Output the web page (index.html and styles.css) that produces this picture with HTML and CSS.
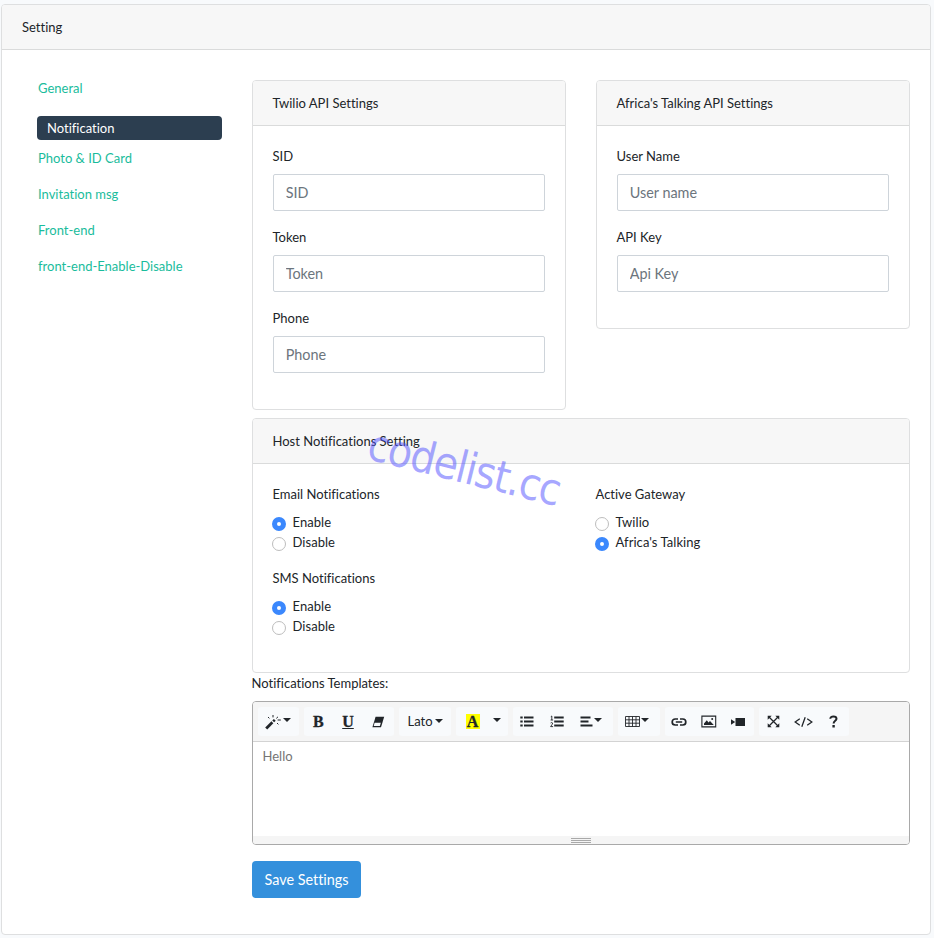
FILE: index.html
```html
<!DOCTYPE html>
<html lang="en">
<head>
<meta charset="utf-8">
<title>Setting</title>
<link rel="stylesheet" href="styles.css">
</head>
<body>
<main class="card page-card">
  <header class="card-header">Setting</header>
  <div class="page-body">
    <nav class="side-nav">
      <a href="#">General</a>
      <a href="#" class="active">Notification</a>
      <a href="#">Photo &amp; ID Card</a>
      <a href="#">Invitation msg</a>
      <a href="#">Front-end</a>
      <a href="#">front-end-Enable-Disable</a>
    </nav>
    <form class="settings">
      <div class="api-cards">
        <section class="card twilio">
          <header class="card-header">Twilio API Settings</header>
          <div class="card-body">
            <label class="field"><span>SID</span><input type="text" placeholder="SID"></label>
            <label class="field"><span>Token</span><input type="text" placeholder="Token"></label>
            <label class="field"><span>Phone</span><input type="text" placeholder="Phone"></label>
          </div>
        </section>
        <section class="card africa">
          <header class="card-header">Africa's Talking API Settings</header>
          <div class="card-body">
            <label class="field"><span>User Name</span><input type="text" placeholder="User name"></label>
            <label class="field"><span>API Key</span><input type="text" placeholder="Api Key"></label>
          </div>
        </section>
      </div>
      <section class="card host">
        <header class="card-header">Host Notifications Setting</header>
        <div class="host-body">
          <div>
            <div class="choice">
              <p>Email Notifications</p>
              <label><input type="radio" name="email" checked>Enable</label>
              <label><input type="radio" name="email">Disable</label>
            </div>
            <div class="choice">
              <p>SMS Notifications</p>
              <label><input type="radio" name="sms" checked>Enable</label>
              <label><input type="radio" name="sms">Disable</label>
            </div>
          </div>
          <div class="choice">
            <p>Active Gateway</p>
            <label><input type="radio" name="gateway">Twilio</label>
            <label><input type="radio" name="gateway" checked>Africa's Talking</label>
          </div>
        </div>
        <div class="watermark">codelist.cc</div>
      </section>
      <p class="templates-label">Notifications Templates:</p>
      <div class="editor">
        <div class="toolbar">
          <div class="group g-style">
            <button type="button"><svg width="17" height="16" viewBox="0 0 17 16"><path d="M1.2 14.4 7.4 8.2" stroke="#212529" stroke-width="2.8"/><path d="m8.2 7.4 1.6-1.6" stroke="#212529" stroke-width="2.6"/><path d="M8 1v2.400M3 3l1.400 1.400M13 2.800l-1.700 1.600M12.600 6h3.200M12 9l1.400 1.400" stroke="#212529" stroke-width="1"/></svg><i class="caret"></i></button>
          </div>
          <div class="group g-three">
            <button type="button" class="serif">B</button>
            <button type="button" class="serif underline">U</button>
            <button type="button"><svg width="14" height="14" viewBox="0 0 14 14"><path d="M4.600 1.800h8.600L10 12.200H1.400z" fill="#212529"/><path d="M3.600 7.800h6.200l-.9 3.100H2.700z" fill="#f8fafc"/></svg></button>
          </div>
          <div class="group g-font"><button type="button">Lato<i class="caret"></i></button></div>
          <div class="group g-color">
            <button type="button" class="serif"><mark>A</mark></button>
            <button type="button"><i class="caret"></i></button>
          </div>
          <div class="group g-para">
            <button type="button"><svg width="14" height="13" viewBox="0 0 14 13"><path d="M.3 2.500h2.400M.3 6.500h2.400M.3 10.500h2.400M4 2.500h9.500M4 6.500h9.500M4 10.500h9.500" stroke="#212529" stroke-width="2"/></svg></button>
            <button type="button"><svg width="14" height="13" viewBox="0 0 14 13"><path d="M4.200 2.500h9.500M4.200 6.500h9.500M4.200 10.500h9.500" stroke="#212529" stroke-width="2"/><path d="M.8 1.700 1.800 1v4M.6 5h2.500M.6 8q1-1 2 0 .2.800-2 3.600h2.500" fill="none" stroke="#212529" stroke-width=".9"/></svg></button>
            <button type="button"><svg width="13" height="13" viewBox="0 0 13 13"><path d="M.5 2.500h10M.5 6.500h8M.5 10.500h12" stroke="#212529" stroke-width="1.900"/></svg><i class="caret"></i></button>
          </div>
          <div class="group g-table"><button type="button"><svg width="15" height="13" viewBox="0 0 15 13"><path d="M.5 1.500h14v10H.5zM.5 4.800h14M.5 8.200h14M4 1.500v10M7.500 1.500v10M11 1.500v10" fill="none" stroke="#212529" stroke-width=".9"/></svg><i class="caret"></i></button></div>
          <div class="group g-media">
            <button type="button"><svg width="16" height="12" viewBox="0 0 16 12"><path d="M7 3H4.200a3 3 0 0 0 0 6H7M9 3h2.800a3 3 0 0 1 0 6H9M4.800 6h6.400" fill="none" stroke="#212529" stroke-width="1.700"/></svg></button>
            <button type="button"><svg width="16" height="13" viewBox="0 0 16 13"><path d="M.9 1.100h13.800v10.800H.9z" fill="none" stroke="#212529" stroke-width="1.100"/><path d="M3 10V8.500l2.800-3.200L7.500 7.500 9 6l3.800 4z" fill="#212529"/><circle cx="11.200" cy="4" r="1" fill="#212529"/></svg></button>
            <button type="button"><svg width="15" height="12" viewBox="0 0 15 12"><path d="M4.500 2h9.500v8H4.500zM0 3.200 4.200 6 0 8.800z" fill="#212529"/></svg></button>
          </div>
          <div class="group g-view">
            <button type="button"><svg width="13" height="13" viewBox="0 0 13 13"><path d="m2 2 9 9M11 2l-9 9" stroke="#212529" stroke-width="1.300"/><path d="M.7.7h4L.7 4.700zM12.300.7v4l-4-4zM.7 12.300v-4l4 4zM12.300 12.300h-4l4-4z" fill="#212529"/></svg></button>
            <button type="button"><svg width="19" height="12" viewBox="0 0 19 12"><path d="M5.800 2.800 1.200 6l4.600 3.200M13.200 2.800 17.800 6l-4.600 3.200M11.200 1.200 7.800 10.800" fill="none" stroke="#212529" stroke-width="1.300"/></svg></button>
            <button type="button"><svg width="9" height="13" viewBox="0 0 9 13"><path d="M1.300 3.800C1.300 2.200 2.700 1.400 4.400 1.400c1.900 0 3.100.9 3.100 2.400 0 2-2.900 2-2.900 4.600" fill="none" stroke="#212529" stroke-width="2"/><path d="M3.400 10h2.400v2.400H3.400z" fill="#212529"/></svg></button>
          </div>
        </div>
        <div class="editable">Hello</div>
        <div class="resize"><i></i><i></i><i></i></div>
      </div>
      <button type="button" class="save">Save Settings</button>
    </form>
  </div>
</main>
</body>
</html>
```

FILE: styles.css
```css
* { box-sizing: border-box; }
body {
  margin: 0;
  padding: 4px 3px 3px 1px;
  background: #f8fafc;
  color: #212529;
  font: 13px/20px Lato, sans-serif;
  font-variant-ligatures: none;
}
p { margin: 0; }
.card {
  background: #fff;
  border: 1px solid #dedfe0;
  border-radius: 4px;
}
.card-header {
  height: 45px;
  padding: 12px 20px;
  background: #f7f7f7;
  border-bottom: 1px solid #dadbdb;
  border-radius: 3px 3px 0 0;
}
.page-card { height: 931px; }
.page-body { display: flex; padding: 30px 20px 0 35px; }
.side-nav {
  display: flex;
  flex-direction: column;
  flex: none;
  width: 185px;
  margin-right: 30px;
}
.side-nav a {
  height: 20px;
  margin: 0 0 16px 1px;
  color: #1abc9c;
  line-height: 17px;
  text-decoration: none;
}
.side-nav .active {
  height: 24px;
  margin: 0 0 10px;
  padding-left: 10px;
  background: #2c3e50;
  border-radius: 4px;
  color: #fff;
  line-height: 24px;
}
.settings { width: 658px; }
.settings .card-header { padding-left: 19.5px; }
.api-cards {
  display: grid;
  grid-template-columns: 314px 314px;
  gap: 30px;
  align-items: start;
}
.twilio { height: 330px; }
.africa { height: 249px; }
.card-body { padding: 20px; }
.field { display: block; margin-bottom: 16px; }
.field span { display: block; margin: 0 0 8px -.5px; }
.field input {
  display: block;
  width: 272px;
  height: 37px;
  padding: 6px 12px 6px 11.7px;
  border: 1px solid #ced4da;
  border-radius: 2px;
  font: 14.4px/23px Lato, sans-serif;
  font-variant-ligatures: none;
}
.field input::placeholder { color: #6c757d; opacity: 1; }
.host { position: relative; height: 255px; margin-top: 8px; }
.host-body {
  display: grid;
  grid-template-columns: 323px 1fr;
  padding: 20px;
}
.choice { margin-bottom: 16px; }
.choice p { margin: 0 0 8px -.5px; }
.choice label { display: flex; height: 20px; letter-spacing: .05px; }
.choice input {
  appearance: none;
  width: 14px;
  height: 14px;
  margin: 5px 6.5px 0 -1px;
  background: #fff;
  border: 1px solid #bdbdbd;
  border-radius: 50%;
}
.choice input:checked {
  border: 5px solid #3b88fd;
}
.watermark {
  position: absolute;
  left: 116px;
  top: 1px;
  color: rgba(80, 80, 255, .5);
  font: 44px/48px "DejaVu Sans Condensed", "DejaVu Sans", sans-serif;
  font-stretch: condensed;
  letter-spacing: -1.2px;
  transform: rotate(14deg);
  transform-origin: 0 50%;
}
.templates-label { height: 28px; text-indent: -.5px; }
.editor {
  height: 144px;
  border: 1px solid #a9a9a9;
  border-radius: 4px;
  overflow: hidden;
}
.toolbar {
  display: flex;
  align-items: flex-start;
  gap: 5px;
  height: 40px;
  padding: 5px;
  background: #f5f5f5;
  border-bottom: 1px solid #d3d3d3;
}
.group { display: flex; height: 29px; background: #f8fafc; border-radius: 3px; }
.group button {
  display: flex;
  flex: 1;
  align-items: center;
  justify-content: center;
  padding: 0 2px 0 0;
  border: 0;
  background: none;
  color: #212529;
  font: 13px/20px Lato, sans-serif;
}
.group svg { display: block; flex: none; }
.g-style { width: 41px; }
.g-three { width: 90px; }
.group.g-three .serif { padding: 0 1px 0 0; }
.g-font { width: 52px; }
.group.g-font button { padding: 0 0 2px; }
.g-color { width: 52px; }
.group.g-color button { padding: 0 0 0 4px; }
.group.g-color button + button { flex: 0 0 23px; padding: 0 1px 0 0; }
.g-para { width: 100px; }
.g-para button { flex: 0 0 30px; }
.g-para button:last-child { flex: 1; padding-right: 5px; }
.g-table { width: 42px; }
.g-table button { padding-right: 4px; }
.g-media { width: 89px; }
.g-view { width: 90px; }
.group .serif {
  font: bold 16px/20px "Liberation Serif", serif;
  -webkit-text-stroke: .3px #212529;
}
.underline { text-decoration: underline; }
mark { width: 14px; height: 15px; background: #ff0; color: inherit; line-height: 16px; }
.caret {
  margin: -3px 0 0 1px;
  border: 4px solid transparent;
  border-top-color: #212529;
  border-bottom: 0;
}
.g-font .caret { margin: 0 0 0 2px; }
.editable { height: 94px; padding: 4px 9.5px; color: #757575; }
.resize {
  display: flex;
  flex-direction: column;
  align-items: center;
  gap: 1px;
  height: 8px;
  padding-top: 2px;
  background: #f5f5f5;
}
.resize i { width: 20px; height: 1px; background: #a9a9a9; }
.save {
  display: block;
  width: 109px;
  height: 37px;
  margin-top: 16px;
  padding: 0 0 1px;
  background: #3490dc;
  border: 0;
  border-radius: 4px;
  color: #fff;
  font: 14.4px/23px Lato, sans-serif;
  font-variant-ligatures: none;
}
```
